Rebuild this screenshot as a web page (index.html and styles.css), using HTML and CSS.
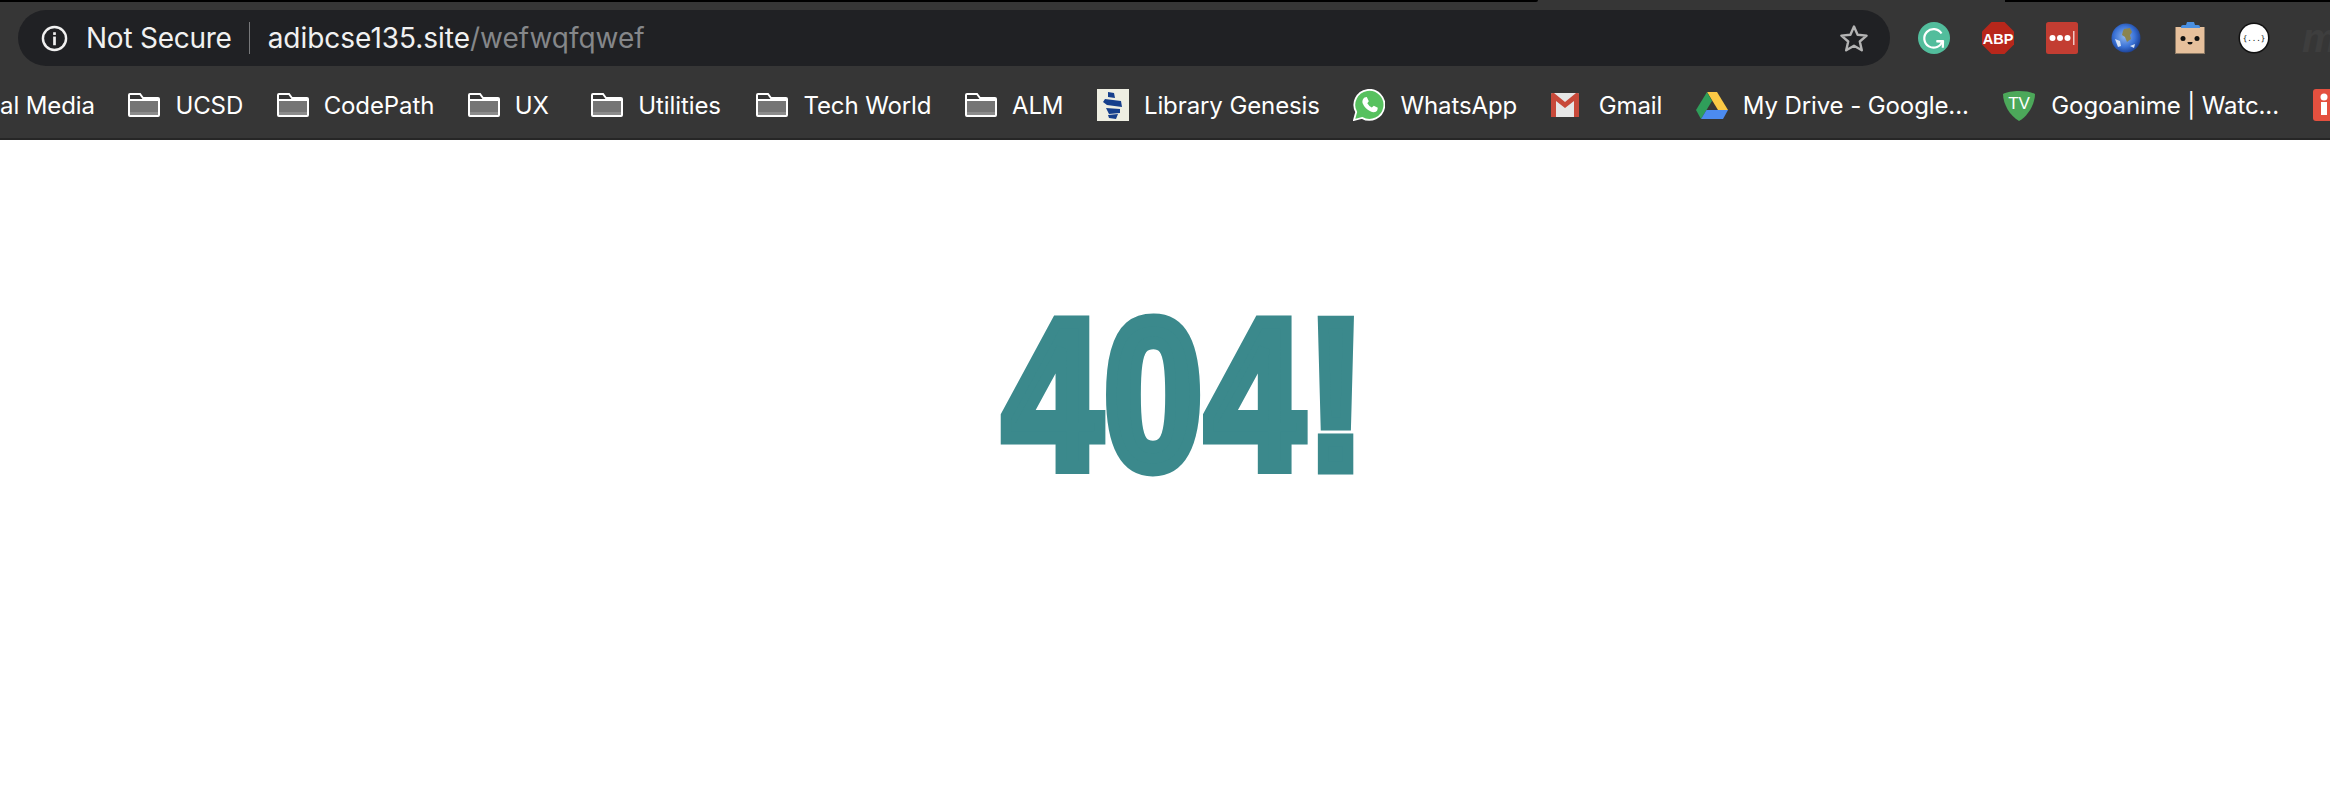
FILE: index.html
```html
<!DOCTYPE html>
<html lang="en">
<head>
<meta charset="utf-8">
<title>404!</title>
<link rel="stylesheet" href="styles.css">
</head>
<body>
<svg class="defs" width="0" height="0" aria-hidden="true">
  <symbol id="folder" viewBox="0 0 32 24">
    <path d="M1 7h30v15.500a1 1 0 0 1-1 1H2a1 1 0 0 1-1-1z" fill="#757575"/>
    <rect x="2" y="19" width="28" height="3" fill="#8c8c8c"/>
    <path d="M1 22V2a1 1 0 0 1 1-1h10l3 4h15a1 1 0 0 1 1 1v16a1 1 0 0 1-1 1H2a1 1 0 0 1-1-1zM1 7h30" fill="none" stroke="#fff" stroke-width="2"/>
  </symbol>
</svg>
<header class="browser">
  <div class="tabstrip">
    <div class="edge edge-left"></div>
    <div class="edge edge-right"></div>
  </div>
  <div class="toolbar">
    <div class="omnibox">
      <svg class="info" viewBox="0 0 28 28"><circle cx="14" cy="14" r="12" fill="none" stroke="#f1f1f1" stroke-width="2.500"/><rect x="12.600" y="12" width="2.800" height="9" fill="#f1f1f1"/><rect x="12.600" y="7.500" width="2.800" height="2.800" fill="#f1f1f1"/></svg>
      <span class="secure">Not Secure</span>
      <span class="divider"></span>
      <span class="url">adibcse135.site<span class="path">/wefwqfqwef</span></span>
      <svg class="star" viewBox="0 0 30 28"><path d="M15 2.500l3.600 8.300 9 .8-6.800 5.900 2 8.800L15 21.700l-7.800 4.600 2-8.800L2.400 11.600l9-.8z" fill="none" stroke="#b4b4b4" stroke-width="2.400" stroke-linejoin="round"/></svg>
    </div>
    <div class="extensions">
      <svg class="ext" viewBox="0 0 32 32"><circle cx="16" cy="16" r="16" fill="#52bd9c"/><path d="M23.500 11.500A9.300 9.300 0 1 0 24.500 19h-6" fill="none" stroke="#fff" stroke-width="2.200"/><path d="M18.500 19.500l6.500.2-.2 6" fill="none" stroke="#fff" stroke-width="2.200"/></svg>
      <svg class="ext" viewBox="0 0 32 32"><path d="M9.500 0h13L32 9.500v13L22.500 32h-13L0 22.500v-13z" fill="#b8271b"/><text x="16" y="21.500" class="abp">ABP</text></svg>
      <svg class="ext" viewBox="0 0 32 32"><rect width="32" height="32" rx="2.500" fill="#c33d32"/><circle cx="6.500" cy="16" r="3" fill="#fff"/><circle cx="14" cy="16" r="3" fill="#fff"/><circle cx="21.500" cy="16" r="3" fill="#fff"/><rect x="27" y="9" width="1.500" height="14" fill="#f1c7c3"/></svg>
      <svg class="ext" viewBox="0 0 32 32">
        <defs><radialGradient id="sea" cx="45%" cy="45%" r="60%"><stop offset="0" stop-color="#8db4ee"/><stop offset=".6" stop-color="#3a72d6"/><stop offset="1" stop-color="#17398a"/></radialGradient></defs>
        <circle cx="16" cy="16" r="14.500" fill="url(#sea)"/>
        <path d="M14 7l6-1 2 4-2 3 1 4-4 3-2-5-3-2 1-4z" fill="#8a8450"/>
        <path d="M5 17l5 2 1 5-3 1z M20 24l5-2-1 4z" fill="#e6eefa" opacity=".9"/>
      </svg>
      <svg class="ext" viewBox="0 0 32 32"><rect x="1" y="5" width="30" height="27" fill="#8c7a66"/><rect x="2" y="5" width="28" height="26" fill="#e6c09c"/><path d="M7 5a2 2 0 0 1 2-2h3l1-3h7l1 3h3a2 2 0 0 1 2 2v1H7z" fill="#4a90e2"/><circle cx="9" cy="16.500" r="2.500" fill="#111"/><circle cx="23" cy="16.500" r="2.500" fill="#111"/><path d="M13.500 20a2.500 2.500 0 0 0 5 0z" fill="#111"/></svg>
      <svg class="ext" viewBox="0 0 32 32"><circle cx="16" cy="16" r="15.500" fill="#111"/><circle cx="16" cy="16" r="14" fill="#fff"/><text x="16" y="19" class="braces">{...}</text></svg>
      <span class="ghost">m</span>
    </div>
  </div>
  <nav class="bookmarks">
    <span class="bm bm-social">al Media</span>
    <span class="bm bm-ucsd"><svg class="ico-folder"><use href="#folder"/></svg>UCSD</span>
    <span class="bm bm-code"><svg class="ico-folder"><use href="#folder"/></svg>CodePath</span>
    <span class="bm bm-ux"><svg class="ico-folder"><use href="#folder"/></svg>UX</span>
    <span class="bm bm-util"><svg class="ico-folder"><use href="#folder"/></svg>Utilities</span>
    <span class="bm bm-tech"><svg class="ico-folder"><use href="#folder"/></svg>Tech World</span>
    <span class="bm bm-alm"><svg class="ico-folder"><use href="#folder"/></svg>ALM</span>
    <span class="bm bm-lib"><svg class="ico" viewBox="0 0 32 32"><rect width="32" height="32" fill="#eeeee2"/><path d="M11 3l6 1 1 5-7-1zM8 10l16 2 1 6-15-2-4-3zM9 19l14 1 0 4-11 1zM11 26l10-1-2 5-7-1z" fill="#163f8c"/></svg>Library Genesis</span>
    <span class="bm bm-wa"><svg class="ico" viewBox="0 0 32 32"><path d="M1 31l2.200-8A15 15 0 1 1 9 28.900z" fill="#57c15f" stroke="#fff" stroke-width="1.800"/><path d="M11.500 8.500l2.300-.5 2 4.200-1.500 2a11 11 0 0 0 4.500 4.300l2-1.700 4 2-.5 2.500c-1 2-4 2.500-7 1A16 16 0 0 1 9.500 14c-.5-2.500.5-4.500 2-5.500z" fill="#fff"/></svg>WhatsApp</span>
    <span class="bm bm-gmail"><svg class="ico-gmail" viewBox="0 0 28 24"><rect width="28" height="24" rx="1.500" fill="#e6e6e6"/><path d="M0 1.500A1.500 1.500 0 0 1 1.500 0H3l11 9 11-9h1.500A1.500 1.500 0 0 1 28 1.500V24h-5V8L14 15 5 8v16H0z" fill="#c8493a"/></svg>Gmail</span>
    <span class="bm bm-drive"><svg class="ico" viewBox="0 0 32 32"><path d="M11 3h10l11 18H22z" fill="#fbc945"/><path d="M11 3l5 9-11 18-5-9z" fill="#2f9e5a"/><path d="M5 30l5.500-9H32l-5 9z" fill="#4c8bf0"/></svg>My Drive - Google...</span>
    <span class="bm bm-gogo"><svg class="ico" viewBox="0 0 34 32"><path d="M1 5C8 1 26 1 33 5c0 10-7 22-16 27C8 27 1 15 1 5z" fill="#4ca85a"/><text x="17" y="20" class="tv">TV</text></svg>Gogoanime | Watc...</span>
    <span class="bm bm-last"><svg class="ico" viewBox="0 0 32 32"><rect width="32" height="32" rx="3" fill="#e4503f"/><circle cx="11" cy="8" r="3.500" fill="#fff"/><rect x="8" y="13" width="6" height="13" fill="#fff"/><rect x="18" y="13" width="6" height="13" fill="#fff"/></svg></span>
  </nav>
</header>
<main class="page">
  <h1 class="title">404!</h1>
</main>
</body>
</html>
```
FILE: styles.css
```css
* { box-sizing: border-box; }
html, body { margin: 0; padding: 0; height: 100%; background: #fff; overflow: hidden; }
body { font-family: Inter, "Noto Sans", "Liberation Sans", sans-serif; }
.defs { position: absolute; }

.browser { background: #363636; border-bottom: 2px solid #262626; height: 140px; overflow: hidden; }
.tabstrip { height: 10px; display: flex; justify-content: space-between; align-items: flex-start; }
.edge { height: 2px; background: #000; }
.edge-left { width: 1538px; border-bottom-right-radius: 2px; }
.edge-right { width: 325px; }

.toolbar { height: 56px; padding-left: 18px; display: flex; align-items: center; gap: 28px; }
.omnibox {
  width: 1872px; height: 56px; flex: none;
  background: #202124; border-radius: 28px;
  display: flex; align-items: center;
  padding: 0 21px 0 23px;
  font-size: 28px; color: #f1f1f1;
}
.info { width: 27px; height: 27px; flex: none; margin-right: 18px; }
.secure { letter-spacing: -.25px; }
.divider { width: 1px; height: 32px; background: #77787a; margin: 0 18px 0 17px; }
.url { letter-spacing: -.03px; flex: 1; }
.path { color: #85878a; }
.star { width: 30px; height: 28px; flex: none; }

.extensions { display: flex; align-items: center; gap: 32px; flex: none; }
.ext { width: 32px; height: 32px; flex: none; }
.abp { font: 700 14.500px "Liberation Sans", sans-serif; fill: #fff; text-anchor: middle; }
.braces { font: 400 7.500px "DejaVu Sans Mono", monospace; fill: #111; text-anchor: middle; }
.ghost { font: italic 700 40px "Liberation Sans", sans-serif; color: #3e3e3e; width: 30px; }

.bookmarks {
  height: 72px; padding-top: 6px; display: flex; align-items: center; gap: 33.500px;
  font-size: 24px; color: #fff; white-space: nowrap; overflow: hidden;
}
.bm { display: flex; align-items: center; gap: 15px; flex: none; letter-spacing: -.1px; }
.ico-folder { width: 32px; height: 24px; flex: none; }
.ico { width: 32px; height: 32px; flex: none; }
.ico-gmail { width: 28px; height: 24px; flex: none; margin-right: 5px; }
.tv { font: 400 17px "Liberation Sans", sans-serif; fill: #fff; text-anchor: middle; }
.bm-ux { margin-right: 9px; }
.bm-util { margin-right: 2px; }
.bm-gogo .ico { width: 34px; }

.page { display: flex; justify-content: center; padding: 145px 0 0 43px; }
.title {
  margin: 0; line-height: 220px;
  font-family: "Liberation Sans", sans-serif; font-weight: 700; font-size: 211px;
  color: #3b898c; -webkit-text-stroke: 13px #3b898c;
  transform: scaleX(.83); letter-spacing: 4.500px;
}
```
